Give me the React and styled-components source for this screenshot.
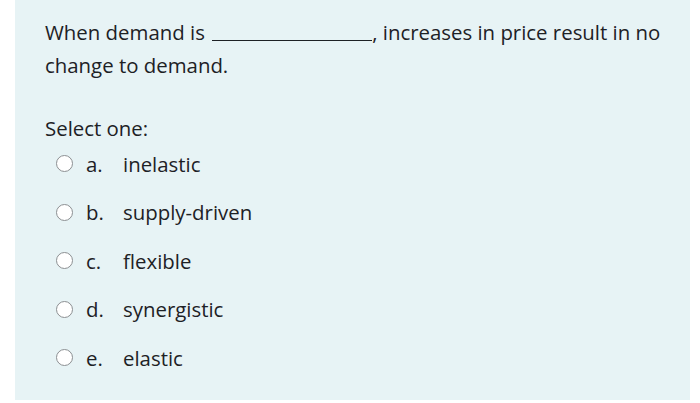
import React from 'react'
import styled, { createGlobalStyle } from 'styled-components'

const GlobalStyle = createGlobalStyle`
  body {
    margin: 0;
    background: #ffffff;
    font-family: "Open Sans", "Noto Sans", sans-serif;
    color: #1d2125;
  }
`

const options = [
  { letter: 'a.', text: 'inelastic' },
  { letter: 'b.', text: 'supply-driven' },
  { letter: 'c.', text: 'flexible' },
  { letter: 'd.', text: 'synergistic' },
  { letter: 'e.', text: 'elastic' },
]

function App() {
  return (
    <>
      <GlobalStyle />
      <Panel>
        <Question>
          When demand is <Blank />, increases in price result in no change to demand.
        </Question>
        <Prompt>Select one:</Prompt>
        <Answers>
          {options.map((o) => (
            <Option key={o.letter}>
              <Radio />
              <Letter>{o.letter}</Letter>
              <span>{o.text}</span>
            </Option>
          ))}
        </Answers>
      </Panel>
    </>
  )
}

export default App

const Panel = styled.div`
  margin-left: 15px;
  width: 675px;
  height: 400px;
  box-sizing: border-box;
  background: #e7f3f5;
  padding: 16px 30px 0 30px;
  font-size: 20.4px;
`

const Question = styled.p`
  margin: 0;
  line-height: 33px;
  width: 630px;
`

const Blank = styled.span`
  display: inline-block;
  width: 160px;
  margin-left: 2px;
  border-bottom: 1px solid #1d2125;
  vertical-align: -1px;
`

const Prompt = styled.p`
  margin: 30px 0 0 0;
  line-height: 33px;
`

const Answers = styled.div`
  display: flex;
  flex-direction: column;
  gap: 15.5px;
  margin-top: 2px;
  padding-left: 11px;
`

const Option = styled.label`
  display: flex;
  align-items: center;
  height: 33px;
`

const Radio = styled.span`
  width: 15px;
  height: 15px;
  border: 1.5px solid #8c8f92;
  border-radius: 50%;
  background: #ffffff;
  flex-shrink: 0;
`

const Letter = styled.span`
  margin-left: 13px;
  width: 37px;
`
